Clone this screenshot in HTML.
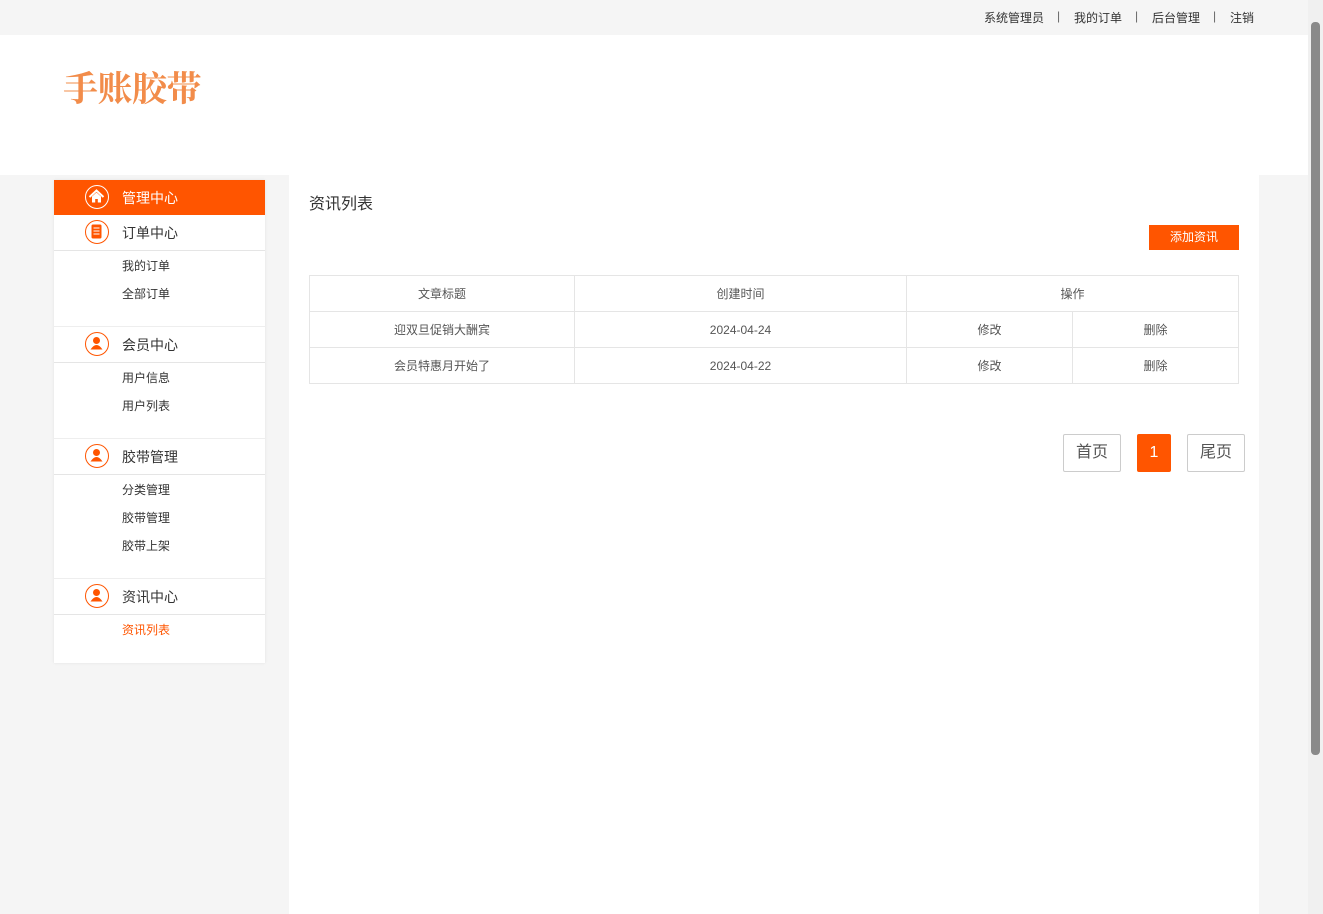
<!DOCTYPE html>
<html><head><meta charset="utf-8"><style>
*{margin:0;padding:0;box-sizing:border-box}
body{width:1323px;height:914px;overflow:hidden;background:#f5f5f5;font-family:"Liberation Sans","Noto Sans CJK SC",sans-serif;color:#333;position:relative}
.top{position:absolute;left:0;top:0;width:1308px;height:35px;background:#f5f5f5;font-size:12px}
.top span{position:absolute;top:9px}
.hdr{position:absolute;left:0;top:35px;width:1308px;height:140px;background:#fff}
.logo{position:absolute;left:63px;top:27px;font-family:"Noto Serif CJK SC",serif;font-size:35px;font-weight:bold;color:#f28c4a;letter-spacing:-0.5px}
.side{position:absolute;left:54px;top:180px;width:211px;height:483px;background:#fff;box-shadow:0 0 3px rgba(0,0,0,.08)}
.main{position:absolute;left:289px;top:175px;width:970px;height:739px;background:#fff}
.h{position:absolute;left:0;width:211px;height:36px;border-bottom:1px solid #e5e5e5;font-size:14px;color:#333}
.h .ic{position:absolute;left:31px;top:5px;width:24px;height:24px;border:1.5px solid #ff5500;border-radius:50%}
.h .ic svg{position:absolute;left:0;top:0}
.h .t{position:absolute;left:68px;top:8px}
.act{background:#ff5500;color:#fff}
.act .ic{border-color:#fff}
.s{position:absolute;left:68px;font-size:12px;color:#333}
.sep{position:absolute;left:0;width:211px;height:1px;background:#eee}
table{position:absolute;left:20px;top:100px;width:930px;border-collapse:collapse;font-size:12px;color:#555}
td{border:1px solid #e5e5e5;height:36px;text-align:center}
.pg{position:absolute;top:259px;height:38px;border:1px solid #ccc;border-radius:2px;font-size:16px;color:#555;text-align:center;line-height:36px;background:#fff}
.sb{position:absolute;left:1308px;top:0;width:15px;height:914px;background:#f0f0f0}
.sb div{position:absolute;left:3px;top:22px;width:9px;height:733px;background:#8a8a8a;border-radius:4px}
</style></head><body>
<div class="top"><span style="left:984px">系统管理员</span><span style="left:1057px;color:#666">|</span><span style="left:1074px">我的订单</span><span style="left:1135px;color:#666">|</span><span style="left:1152px">后台管理</span><span style="left:1213px;color:#666">|</span><span style="left:1230px">注销</span></div>
<div class="hdr"><div class="logo">手账胶带</div></div>
<div class="side">
<div class="h act" style="top:0;height:35px;border:none"><div class="ic"><svg width="21" height="21" viewBox="0 0 21 21"><path d="M3.5 11L10.5 4.5L17.5 11" fill="none" stroke="#fff" stroke-width="2"/><path d="M6 10.5v6h3.2v-3.5h2.6v3.5H15v-6L10.5 6.5z" fill="#fff"/></svg></div><span class="t">管理中心</span></div>
<div class="h" style="top:35px"><div class="ic"><svg width="21" height="21"><rect x="5.5" y="3.5" width="10" height="14" rx="1.5" fill="#ff5500"/><path d="M7.5 7h6M7.5 10h6M7.5 13h6" stroke="#fff"/></svg></div><span class="t">订单中心</span></div>
<div class="s" style="top:77px">我的订单</div><div class="s" style="top:105px">全部订单</div>
<div class="sep" style="top:146px"></div>
<div class="h" style="top:147px"><div class="ic"><svg width="21" height="21"><circle cx="10.5" cy="7.5" r="3.5" fill="#ff5500"/><path d="M4.5 16.5q6-9 12 0z" fill="#ff5500"/></svg></div><span class="t">会员中心</span></div>
<div class="s" style="top:189px">用户信息</div><div class="s" style="top:217px">用户列表</div>
<div class="sep" style="top:258px"></div>
<div class="h" style="top:259px"><div class="ic"><svg width="21" height="21"><circle cx="10.5" cy="7.5" r="3.5" fill="#ff5500"/><path d="M4.5 16.5q6-9 12 0z" fill="#ff5500"/></svg></div><span class="t">胶带管理</span></div>
<div class="s" style="top:301px">分类管理</div><div class="s" style="top:329px">胶带管理</div><div class="s" style="top:357px">胶带上架</div>
<div class="sep" style="top:398px"></div>
<div class="h" style="top:399px"><div class="ic"><svg width="21" height="21"><circle cx="10.5" cy="7.5" r="3.5" fill="#ff5500"/><path d="M4.5 16.5q6-9 12 0z" fill="#ff5500"/></svg></div><span class="t">资讯中心</span></div>
<div class="s" style="top:441px;color:#ff5500">资讯列表</div>
</div>
<div class="main">
<div style="position:absolute;left:20px;top:15px;font-size:16px;color:#333">资讯列表</div>
<div style="position:absolute;left:860px;top:50px;width:90px;height:25px;background:#ff5500;color:#fff;font-size:12px;text-align:center;line-height:25px">添加资讯</div>
<table>
<tr><td style="width:265px">文章标题</td><td style="width:332px">创建时间</td><td colspan="2">操作</td></tr>
<tr><td>迎双旦促销大酬宾</td><td>2024-04-24</td><td style="width:166px">修改</td><td>删除</td></tr>
<tr><td>会员特惠月开始了</td><td>2024-04-22</td><td>修改</td><td>删除</td></tr>
</table>
<div class="pg" style="left:774px;width:58px">首页</div>
<div class="pg" style="left:848px;width:34px;background:#ff5500;border-color:#ff5500;color:#fff">1</div>
<div class="pg" style="left:898px;width:58px">尾页</div>
</div>
<div class="sb"><div></div></div>
</body></html>
